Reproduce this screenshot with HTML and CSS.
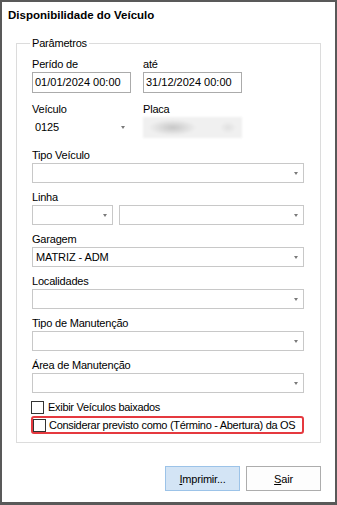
FILE: index.html
```html
<!DOCTYPE html>
<html lang="pt-BR">
<head>
  <meta charset="UTF-8" />
  <title>Disponibilidade do Veículo</title>
  <link rel="stylesheet" href="styles.css">
</head>
<body>
<div class="window">
  <div class="title">Disponibilidade do Veículo</div>

  <fieldset class="params">
    <legend>Parâmetros</legend>

    <!-- === Período / Veículo === -->
    <div class="row top">
      <div class="field half">
        <label>Perído de</label>
        <div class="input">01/01/2024 00:00</div>
      </div>
      <div class="field half">
        <label>até</label>
        <div class="input">31/12/2024 00:00</div>
      </div>
    </div>
    <div class="row top">
      <div class="field half">
        <label>Veículo</label>
        <div class="combo flat">0125</div>
      </div>
      <div class="field half">
        <label>Placa</label>
        <div class="blurred"></div>
      </div>
    </div>

    <!-- === Filtros === -->
    <div class="field">
      <label>Tipo Veículo</label>
      <div class="combo"></div>
    </div>
    <div class="field">
      <label>Linha</label>
      <div class="row pair">
        <div class="combo short"></div>
        <div class="combo grow"></div>
      </div>
    </div>
    <div class="field">
      <label>Garagem</label>
      <div class="combo">MATRIZ - ADM</div>
    </div>
    <div class="field">
      <label>Localidades</label>
      <div class="combo"></div>
    </div>
    <div class="field">
      <label>Tipo de Manutenção</label>
      <div class="combo"></div>
    </div>
    <div class="field">
      <label>Área de Manutenção</label>
      <div class="combo"></div>
    </div>

    <!-- === Opções === -->
    <label class="check"><span class="box"></span>Exibir Veículos baixados</label>
    <label class="check marked"><span class="box"></span>Considerar previsto como (Término - Abertura) da OS</label>
  </fieldset>

  <div class="actions">
    <button class="btn primary"><u>I</u>mprimir...</button>
    <button class="btn"><u>S</u>air</button>
  </div>
</div>
</body>
</html>
```

FILE: styles.css
```css
* {
  box-sizing: border-box;
}

body {
  margin: 0;
  font-family: 'Liberation Sans', Arial, sans-serif;
  font-size: 11px;
  color: #000000;
  background-color: #FFFFFF;
}

/* ===== Window ===== */
.window {
  width: 337px;
  height: 505px;
  border: 2px solid #595959;
  border-bottom-width: 3px;
  background-color: #FFFFFF;
}

.title {
  margin: 6px 0 0 6px;
  font-size: 11.5px;
  font-weight: bold;
  line-height: 14px;
}

/* ===== Group box ===== */
.params {
  width: 305px;
  margin: 15px 0 0 14px;
  padding: 8px 16px 8px 15px;
  border: 1px solid #DCDCDC;
}

.params legend {
  padding: 0 2px;
  margin-left: -2px;
  line-height: 13px;
  letter-spacing: -0.2px;
}

.row {
  display: flex;
  gap: 12px;
}

.row.top + .row.top {
  margin-top: 10px;
}

.row.top + .field {
  margin-top: 11px;
}

.row.pair {
  gap: 6px;
}

.params > .field + .field {
  margin-top: 8px;
}

.field label {
  display: block;
  line-height: 13px;
  margin-bottom: 1px;
  letter-spacing: -0.2px;
}

.half {
  width: 99px;
}

.input {
  height: 21px;
  border: 1px solid #ABABAB;
  padding: 0 2px;
  line-height: 19px;
  white-space: nowrap;
}

.combo {
  position: relative;
  height: 20px;
  border: 1px solid #C8C8C8;
  padding: 0 3px;
  line-height: 18px;
  letter-spacing: -0.1px;
}

.combo::after {
  content: "";
  position: absolute;
  right: 5px;
  top: 8px;
  border-left: 2.5px solid transparent;
  border-right: 2.5px solid transparent;
  border-top: 3px solid #7A7A7A;
}

.combo.flat {
  border-color: #FFFFFF;
  line-height: 19px;
  padding-left: 2px;
}

.combo.short {
  width: 81px;
}

.combo.grow {
  flex-grow: 1;
}

.blurred {
  height: 21px;
  background:
    radial-gradient(ellipse 24px 8px at 30% 50%, #C6C6C6, rgba(240, 240, 240, 0)),
    radial-gradient(ellipse 8px 6px at 86% 50%, #E0E0E0, rgba(240, 240, 240, 0)),
    #F0F0F0;
  filter: blur(1px);
}

/* ===== Checkboxes ===== */
.check {
  display: flex;
  align-items: center;
  gap: 4px;
  margin: 8px 0 0 -1px;
  line-height: 13px;
  letter-spacing: -0.3px;
}

.check .box {
  width: 13px;
  height: 13px;
  border: 1px solid #333333;
  background-color: #FFFFFF;
}

.check.marked {
  width: 273px;
  height: 18px;
  margin-top: 2px;
  gap: 3px;
  border: 2px solid #E5393F;
  border-radius: 3px;
}

/* ===== Buttons ===== */
.actions {
  display: flex;
  justify-content: flex-end;
  gap: 6px;
  margin-top: 23px;
  padding-right: 14px;
}

.btn {
  width: 75px;
  height: 25px;
  border: 1px solid #ADADAD;
  background-color: #FDFDFD;
  font-family: 'Liberation Sans', Arial, sans-serif;
  font-size: 11px;
  letter-spacing: -0.2px;
  color: #000000;
  padding: 0;
}

.btn.primary {
  background-color: #D3E4F5;
  border-color: #9CC3E8;
}
```
